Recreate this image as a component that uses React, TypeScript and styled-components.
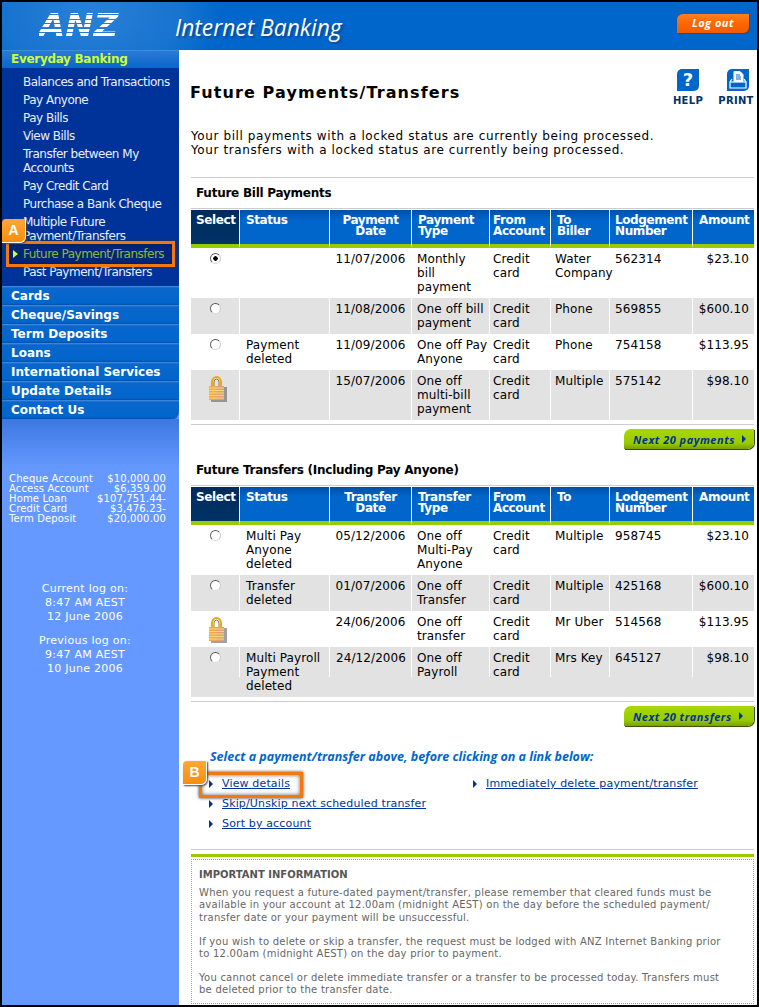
import styled, { createGlobalStyle } from "styled-components";

const GlobalStyle = createGlobalStyle`
  html, body {
    margin: 0;
    padding: 0;
    background: #000;
  }
  * {
    box-sizing: border-box;
  }
`;

const bodyFont = `"DejaVu Sans", Verdana, sans-serif`;

type Row = {
  select: "on" | "off" | "lock";
  cells: string[];
  height: number;
  grey?: boolean;
  short?: boolean;
};

const billRows: Row[] = [
  { select: "on", height: 50, cells: ["", "11/07/2006", "Monthly\nbill\npayment", "Credit\ncard", "Water\nCompany", "562314", "$23.10"] },
  { select: "off", height: 36, grey: true, cells: ["", "11/08/2006", "One off bill\npayment", "Credit\ncard", "Phone", "569855", "$600.10"] },
  { select: "off", height: 36, cells: ["Payment\ndeleted", "11/09/2006", "One off\u00a0Pay\nAnyone", "Credit\ncard", "Phone", "754158", "$113.95"] },
  { select: "lock", height: 50, grey: true, cells: ["", "15/07/2006", "One off\nmulti-bill\npayment", "Credit\ncard", "Multiple", "575142", "$98.10"] },
];

const transferRows: Row[] = [
  { select: "off", height: 50, cells: ["Multi Pay\nAnyone\ndeleted", "05/12/2006", "One off\nMulti-Pay\nAnyone", "Credit\ncard", "Multiple", "958745", "$23.10"] },
  { select: "off", height: 36, grey: true, cells: ["Transfer\ndeleted", "01/07/2006", "One off\nTransfer", "Credit\ncard", "Multiple", "425168", "$600.10"] },
  { select: "lock", height: 36, cells: ["", "24/06/2006", "One off\ntransfer", "Credit\ncard", "Mr Uber", "514568", "$113.95"] },
  { select: "off", height: 50, grey: true, short: true, cells: ["Multi Payroll\nPayment\ndeleted", "24/12/2006", "One off\nPayroll", "Credit\ncard", "Mrs Key", "645127", "$98.10"] },
];

const menuLinks = [
  "Balances and Transactions",
  "Pay Anyone",
  "Pay Bills",
  "View Bills",
  "Transfer between My\nAccounts",
  "Pay Credit Card",
  "Purchase a Bank Cheque",
  "Multiple Future\nPayment/Transfers",
];

const menuSections = [
  "Cards",
  "Cheque/Savings",
  "Term Deposits",
  "Loans",
  "International Services",
  "Update Details",
  "Contact Us",
];

const balances = [
  ["Cheque Account", "$10,000.00"],
  ["Access Account", "$6,359.00"],
  ["Home Loan", "$107,751.44-"],
  ["Credit Card", "$3,476.23-"],
  ["Term Deposit", "$20,000.00"],
];

const headPadding = [5, 6, 5, 6, 3, 6, 5, 6];
const bodyPadding = [6, 0, 5, 3, 4, 5, 0];

const LockIcon = () => (
  <LockSvg width="19" height="27" viewBox="0 0 19 27">
    <rect x="3" y="12" width="16" height="15" fill="#555" opacity="0.55" />
    <path d="M4 12V7.500a4.500 5.500 0 0 1 9 0V12" fill="none" stroke="#e8a820" strokeWidth="2.200" />
    <path d="M6 12V7.500a2.500 3.500 0 0 1 5 0V12" fill="none" stroke="#8a7a50" strokeWidth="1" />
    <rect x="1" y="11" width="15" height="14" fill="#f0a850" />
    <rect x="9" y="11" width="7" height="14" fill="#d8a080" />
    <path d="M1 13h15M1 15.500h15M1 18h15M1 20.500h15M1 23h15" stroke="#f8d878" strokeWidth="1" />
  </LockSvg>
);

const PrintIcon = () => (
  <svg width="22" height="22" viewBox="0 0 22 22">
    <path d="M7 2.500h6l3 3v7H7z" fill="#fff" stroke="#fff" />
    <path d="M9 6h4M9 8h5M9 10h5" stroke="#0066cc" strokeWidth="1" />
    <path d="M5 10 3 13v6h16v-6l-2-3" fill="none" stroke="#fff" strokeWidth="1.200" />
    <path d="M3.500 13h15" stroke="#fff" strokeWidth="1.200" />
  </svg>
);

const PaymentTable = ({ headers, rows }: { headers: string[]; rows: Row[] }) => (
  <Table>
    <colgroup>
      <col width={49} />
      <col width={90} />
      <col width={82} />
      <col width={78} />
      <col width={61} />
      <col width={59} />
      <col width={83} />
      <col width={61} />
    </colgroup>
    <thead>
      <tr>
        {headers.map((h, i) => (
          <HeadCell key={h} $dark={i === 0} $center={i === 2} $pad={headPadding[i]}>
            {h}
          </HeadCell>
        ))}
      </tr>
    </thead>
    <tbody>
      {rows.map((row, r) => (
        <BodyRow key={r} $grey={row.grey} $h={row.height}>
          <SelectCell $short={row.short}>
            {row.select === "lock" ? <LockIcon /> : <Radio $on={row.select === "on"} />}
          </SelectCell>
          {row.cells.map((c, i) => (
            <BodyCell key={i} $col={i} $pad={bodyPadding[i]} $short={row.short}>
              {c}
            </BodyCell>
          ))}
        </BodyRow>
      ))}
    </tbody>
  </Table>
);

const App = () => {
  return (
    <>
      <GlobalStyle />
      <Page>
        <Header>
          <LogoArea>
            <Logo>ANZ</Logo>
          </LogoArea>
          <HeaderTitle>Internet Banking</HeaderTitle>
          <LogOut>Log out</LogOut>
        </Header>
        <Main>
          <Sidebar>
            <ActiveSection>Everyday Banking</ActiveSection>
            <SubMenu>
              {menuLinks.map((l) => (
                <SubLink key={l}>{l}</SubLink>
              ))}
              <CurrentLink>
                <Callout $w={169} $h={26} $x={4} $y={-6} />
                <Badge $x={0} $y={-28}>A</Badge>
                <CurrentArrow />
                Future Payment/Transfers
              </CurrentLink>
              <SubLink>Past Payment/Transfers</SubLink>
            </SubMenu>
            <SectionList>
              {menuSections.map((s) => (
                <Section key={s}>{s}</Section>
              ))}
            </SectionList>
            <Balances>
              {balances.map(([name, value]) => (
                <BalanceRow key={name}>
                  <span>{name}</span>
                  <span>{value}</span>
                </BalanceRow>
              ))}
            </Balances>
            <LogBlock>
              Current log on:
              <br />
              8:47 AM AEST
              <br />
              12 June 2006
            </LogBlock>
            <LogBlock $gap>
              Previous log on:
              <br />
              9:47 AM AEST
              <br />
              10 June 2006
            </LogBlock>
          </Sidebar>
          <Content>
            <TitleRow>
              <Title>Future Payments/Transfers</Title>
              <Tools>
                <Tool $w={28}>
                  <ToolIcon><HelpMark>?</HelpMark></ToolIcon>
                  <ToolLabel>HELP</ToolLabel>
                </Tool>
                <Tool $w={36}>
                  <ToolIcon $shift><PrintIcon /></ToolIcon>
                  <ToolLabel>PRINT</ToolLabel>
                </Tool>
              </Tools>
            </TitleRow>
            <Intro>
              Your bill payments with a locked status are currently being processed.
              <br />
              Your transfers with a locked status are currently being processed.
            </Intro>
            <Rule $top={20} />
            <SectionTitle $top={7}>Future Bill Payments</SectionTitle>
            <Rule $top={0} />
            <PaymentTable
              headers={["Select", "Status", "Payment\nDate", "Payment\nType", "From\nAccount", "To\nBiller", "Lodgement\nNumber", "Amount"]}
              rows={billRows}
            />
            <Rule $top={4} />
            <NextRow>
              <NextButton>Next 20 payments<NextArrow /></NextButton>
            </NextRow>
            <SectionTitle $top={0}>Future Transfers (Including Pay Anyone)</SectionTitle>
            <Rule $top={0} />
            <PaymentTable
              headers={["Select", "Status", "Transfer\nDate", "Transfer\nType", "From\nAccount", "To", "Lodgement\nNumber", "Amount"]}
              rows={transferRows}
            />
            <Rule $top={4} />
            <NextRow>
              <NextButton>Next 20 transfers<NextArrow /></NextButton>
            </NextRow>
            <Prompt>Select a payment/transfer above, before clicking on a link below:</Prompt>
            <Links>
              <LinkColumn>
                <LinkItem>
                  <Callout $w={104} $h={26} $x={-10} $y={-5} $soft />
                  <Badge $x={-26} $y={-16}>B</Badge>
                  <LinkArrow />
                  <LinkText>View details</LinkText>
                </LinkItem>
                <LinkItem>
                  <LinkArrow />
                  <LinkText>Skip/Unskip next scheduled transfer</LinkText>
                </LinkItem>
                <LinkItem>
                  <LinkArrow />
                  <LinkText>Sort by account</LinkText>
                </LinkItem>
              </LinkColumn>
              <LinkColumn>
                <LinkItem>
                  <LinkArrow />
                  <LinkText>Immediately delete payment/transfer</LinkText>
                </LinkItem>
              </LinkColumn>
            </Links>
            <Rule $top={18} />
            <GreenBar />
            <InfoBox>
              <InfoTitle>IMPORTANT INFORMATION</InfoTitle>
              <InfoText>
                {"When you request a future-dated payment/transfer, please remember that cleared funds must be\navailable in your account at 12.00am (midnight AEST) on the day before the scheduled payment/\ntransfer date or your payment will be unsuccessful."}
              </InfoText>
              <InfoText>
                {"If you wish to delete or skip a transfer, the request must be lodged with ANZ Internet Banking prior\nto 12.00am (midnight AEST) on the day prior to payment."}
              </InfoText>
              <InfoText>
                {"You cannot cancel or delete immediate transfer or a transfer to be processed today. Transfers must\nbe deleted prior to the transfer date."}
              </InfoText>
            </InfoBox>
          </Content>
        </Main>
      </Page>
    </>
  );
};

export default App;

const Page = styled.div`
  width: 759px;
  height: 1007px;
  border: 2px solid #000;
  background: #fff;
  overflow: hidden;
  display: flex;
  flex-direction: column;
  font-family: ${bodyFont};
`;

const Header = styled.div`
  height: 48px;
  flex: none;
  display: flex;
  align-items: center;
  background: radial-gradient(ellipse 130px 90px at 90px 10px, #2a80d6 0%, #1673cf 70%, #0066cc 100%);
`;

const LogoArea = styled.div`
  width: 173px;
  padding-left: 37px;
  flex: none;
`;

const Logo = styled.div`
  width: 76px;
  font-family: "DejaVu Sans", sans-serif;
  font-weight: 700;
  font-style: italic;
  font-size: 32px;
  line-height: 28px;
  transform: scaleX(1.06);
  transform-origin: left center;
  margin-top: -2px;
  color: transparent;
  background: repeating-linear-gradient(180deg, #fff 0 3px, #2a7ad0 3px 4.5px);
  -webkit-background-clip: text;
  background-clip: text;
`;

const HeaderTitle = styled.div`
  font-family: "Open Sans", "Noto Sans", sans-serif;
  font-style: italic;
  font-size: 22.8px;
  color: #fff;
  text-shadow: 2px 2px 2px #0a4a90;
  margin-top: 2px;
`;

const LogOut = styled.div`
  margin-left: auto;
  margin-right: 8px;
  margin-top: -6px;
  width: 72px;
  height: 19px;
  border-radius: 6px 0 6px 0;
  background: linear-gradient(180deg, #ff8020 0%, #ff6600 50%, #f05c00 100%);
  box-shadow: 1px 1px 0 #7a3a10;
  color: #fff;
  font-family: "Open Sans", sans-serif;
  font-style: italic;
  font-weight: 700;
  font-size: 11px;
  letter-spacing: 0.5px;
  line-height: 18px;
  text-align: center;
`;

const Main = styled.div`
  flex: 1;
  display: flex;
  min-height: 0;
`;

const Sidebar = styled.div`
  width: 177px;
  flex: none;
  background: #6699ff;
  color: #fff;
`;

const ActiveSection = styled.div`
  height: 18px;
  padding-left: 9px;
  background: linear-gradient(180deg, #2a7ad6 0%, #0a66cc 100%);
  color: #ccff33;
  font-weight: 700;
  font-size: 12px;
  line-height: 17px;
  letter-spacing: -0.3px;
  border-top: 1px solid #3f8cdc;
`;

const SubMenu = styled.div`
  background: #003399;
  height: 218px;
  padding-top: 7px;
`;

const SubLink = styled.div`
  padding-left: 21px;
  font-size: 12px;
  line-height: 14px;
  letter-spacing: -0.5px;
  margin-bottom: 4px;
  color: #e8f0ff;
  white-space: pre-line;
`;

const CurrentLink = styled(SubLink)`
  position: relative;
  color: #ccff33;
  white-space: nowrap;
`;

const CurrentArrow = styled.span`
  position: absolute;
  left: 11px;
  top: 3px;
  border-left: 5px solid #ccff33;
  border-top: 4px solid transparent;
  border-bottom: 4px solid transparent;
`;

const Callout = styled.span<{ $w: number; $h: number; $x: number; $y: number; $soft?: boolean }>`
  position: absolute;
  left: ${(p) => p.$x}px;
  top: ${(p) => p.$y}px;
  width: ${(p) => p.$w}px;
  height: ${(p) => p.$h}px;
  border: 3px solid #f07a10;
  background: ${(p) => (p.$soft ? "none" : "rgba(0, 10, 50, 0.3)")};
  box-shadow: 0 0 3px #333, inset 0 0 4px ${(p) => (p.$soft ? "#666" : "#001a55")};
  pointer-events: none;
`;

const Badge = styled.span<{ $x: number; $y: number }>`
  position: absolute;
  left: ${(p) => p.$x}px;
  top: ${(p) => p.$y}px;
  width: 24px;
  height: 24px;
  z-index: 2;
  border-radius: 4px 0 6px 0;
  border: 1px solid #fff;
  border-width: 0 1px 1px 0;
  background: linear-gradient(180deg, #ffa838 0%, #f78d0f 100%);
  box-shadow: 1px 1px 2px #444;
  color: #fff;
  font-family: "Liberation Sans", Arial, sans-serif;
  font-weight: 700;
  font-size: 14px;
  line-height: 23px;
  letter-spacing: 0;
  text-align: center;
`;

const SectionList = styled.div`
  border-bottom-right-radius: 8px;
  overflow: hidden;
  box-shadow: 0 1px 0 #1d4f9c;
`;

const Section = styled.div`
  height: 19px;
  padding-left: 9px;
  background: linear-gradient(180deg, #4a90dc 0, #0a66cc 2px, #0066cc 90%, #004fa8 100%);
  font-weight: 700;
  font-size: 12px;
  line-height: 20px;
`;

const Balances = styled.div`
  padding: 55px 0 0 7px;
  background: linear-gradient(180deg, #3c78e0 0, #6699ff 50px);
  font-size: 10px;
  line-height: 10px;
  letter-spacing: 0.15px;
`;

const BalanceRow = styled.div`
  display: flex;
  justify-content: space-between;
  width: 157px;
`;

const LogBlock = styled.div<{ $gap?: boolean }>`
  margin-top: ${(p) => (p.$gap ? 10 : 58)}px;
  width: 166px;
  text-align: center;
  font-size: 11px;
  line-height: 14px;
  letter-spacing: 0.27px;
`;

const Content = styled.div`
  flex: 1;
  min-width: 0;
  padding: 0 3px 0 12px;
  color: #000;
`;

const TitleRow = styled.div`
  height: 70px;
  display: flex;
  justify-content: space-between;
`;

const Title = styled.h1`
  margin: 33px 0 0 -1px;
  font-size: 16px;
  line-height: 20px;
  font-weight: 700;
  letter-spacing: 1.1px;
`;

const Tools = styled.div`
  display: flex;
  gap: 16px;
  margin-top: 19px;
  height: 40px;
`;

const Tool = styled.div<{ $w: number }>`
  width: ${(p) => p.$w}px;
  display: flex;
  flex-direction: column;
  align-items: center;
`;

const ToolIcon = styled.div<{ $shift?: boolean }>`
  width: 22px;
  height: 22px;
  margin-left: ${(p) => (p.$shift ? 4 : 0)}px;
  background: #0066cc;
  border-radius: 5px 0 5px 0;
  display: flex;
  align-items: center;
  justify-content: center;
`;

const HelpMark = styled.span`
  color: #fff;
  font-weight: 700;
  font-size: 18px;
  line-height: 22px;
`;

const ToolLabel = styled.div`
  margin-top: 4px;
  color: #003366;
  font-weight: 700;
  font-size: 10px;
  line-height: 12px;
  letter-spacing: 0.3px;
`;

const Intro = styled.p`
  margin: 9px 0 0 0;
  font-size: 12px;
  line-height: 14px;
  letter-spacing: 0.6px;
  white-space: nowrap;
`;

const Rule = styled.div<{ $top: number }>`
  height: 1px;
  margin-top: ${(p) => p.$top}px;
  background: #ccc;
`;

const SectionTitle = styled.h2<{ $top: number }>`
  margin: ${(p) => p.$top}px 0 0 0;
  padding: 1px 0 0 5px;
  height: 23px;
  font-size: 12px;
  line-height: 14px;
  font-weight: 700;
  letter-spacing: -0.25px;
`;

const Table = styled.table`
  width: 563px;
  table-layout: fixed;
  border-collapse: separate;
  border-spacing: 0;
  margin-top: 1px;
`;

const HeadCell = styled.th<{ $dark?: boolean; $center?: boolean; $pad: number }>`
  height: 38px;
  vertical-align: top;
  padding: 5px 0 0 ${(p) => (p.$center ? 0 : p.$pad)}px;
  text-align: ${(p) => (p.$center ? "center" : "left")};
  color: #fff;
  font-size: 12px;
  line-height: 11px;
  font-weight: 700;
  letter-spacing: -0.4px;
  white-space: pre-line;
  background: ${(p) =>
    p.$dark
      ? "linear-gradient(180deg, #002b5c 0, #003366 100%)"
      : "linear-gradient(180deg, #004fa8 0, #0066cc 10px)"};
  border-right: 1px solid #fff;
  border-bottom: 4px solid #99cc00;
  &:last-child {
    border-right: 0;
  }
`;

const BodyRow = styled.tr<{ $grey?: boolean; $h: number }>`
  height: ${(p) => p.$h}px;
  background: ${(p) => (p.$grey ? "#e2e2e2" : "#fff")};
`;

const SelectCell = styled.td<{ $short?: boolean }>`
  vertical-align: top;
  padding: 5px 0 0 0;
  border-right: ${(p) => (p.$short ? "0" : "1px solid #fff")};
  background: ${(p) => (p.$short ? "linear-gradient(#fff, #fff) right top / 1px 30px no-repeat" : "none")};
`;

const BodyCell = styled.td<{ $col: number; $pad: number; $short?: boolean }>`
  vertical-align: top;
  padding: 4px ${(p) => (p.$col === 6 ? 5 : 0)}px 0 ${(p) => p.$pad}px;
  text-align: ${(p) => (p.$col === 6 ? "right" : p.$col === 1 ? "center" : "left")};
  font-size: 12px;
  line-height: 14px;
  letter-spacing: 0.1px;
  white-space: pre-line;
  border-right: ${(p) => (p.$short || p.$col === 6 ? "0" : "1px solid #fff")};
  background: ${(p) => (p.$short && p.$col !== 6 ? "linear-gradient(#fff, #fff) right top / 1px 30px no-repeat" : "none")};
`;

const Radio = styled.span<{ $on?: boolean }>`
  display: block;
  width: 11px;
  height: 11px;
  margin: 0 auto;
  border-radius: 50%;
  background: ${(p) => (p.$on ? "radial-gradient(circle, #000 0 2px, #fff 2.5px)" : "#fff")};
  border: 1px solid;
  border-color: #555 #ccc #ddd #666;
`;

const LockSvg = styled.svg`
  display: block;
  margin-left: 17px;
`;

const NextRow = styled.div`
  display: flex;
  justify-content: flex-end;
  margin-top: 4px;
  height: 33px;
`;

const NextButton = styled.div`
  width: 130px;
  height: 20px;
  padding-left: 9px;
  display: flex;
  align-items: center;
  gap: 7px;
  border-radius: 7px 0 7px 0;
  background: linear-gradient(180deg, #a8d800 0%, #99cc00 70%, #7aa000 100%);
  box-shadow: 1px 1px 0 #3d5200;
  color: #003399;
  font-family: "Open Sans", sans-serif;
  font-style: italic;
  font-weight: 700;
  font-size: 11px;
  letter-spacing: 0.5px;
  white-space: nowrap;
`;

const NextArrow = styled.span`
  border-left: 4px solid #003399;
  border-top: 4px solid transparent;
  border-bottom: 4px solid transparent;
`;

const Prompt = styled.div`
  margin-top: 9px;
  padding-left: 19px;
  color: #0066cc;
  font-family: "Open Sans", sans-serif;
  font-style: italic;
  font-weight: 700;
  font-size: 12.5px;
  line-height: 18px;
`;

const Links = styled.div`
  display: flex;
  margin-top: 11px;
  padding-left: 18px;
`;

const LinkColumn = styled.div`
  width: 264px;
  display: flex;
  flex-direction: column;
  gap: 6px;
`;

const LinkItem = styled.div`
  position: relative;
  display: flex;
  align-items: center;
  gap: 9px;
  height: 14px;
`;

const LinkArrow = styled.span`
  border-left: 4px solid #003399;
  border-top: 4px solid transparent;
  border-bottom: 4px solid transparent;
`;

const LinkText = styled.a`
  color: #003399;
  font-size: 11px;
  line-height: 14px;
  letter-spacing: 0.15px;
  text-decoration: underline;
  white-space: nowrap;
`;

const GreenBar = styled.div`
  height: 3px;
  margin-top: 4px;
  background: #99cc00;
`;

const InfoBox = styled.div`
  margin-top: 2px;
  height: 145px;
  padding: 9px 0 0 7px;
  border: 1px dotted #99cc00;
  color: #666;
  font-size: 10px;
  line-height: 12.2px;
  letter-spacing: 0.24px;
`;

const InfoTitle = styled.div`
  font-weight: 700;
  color: #555;
  letter-spacing: 0;
  margin-bottom: 6px;
`;

const InfoText = styled.p`
  margin: 0 0 12px 0;
  white-space: pre-line;
`;
